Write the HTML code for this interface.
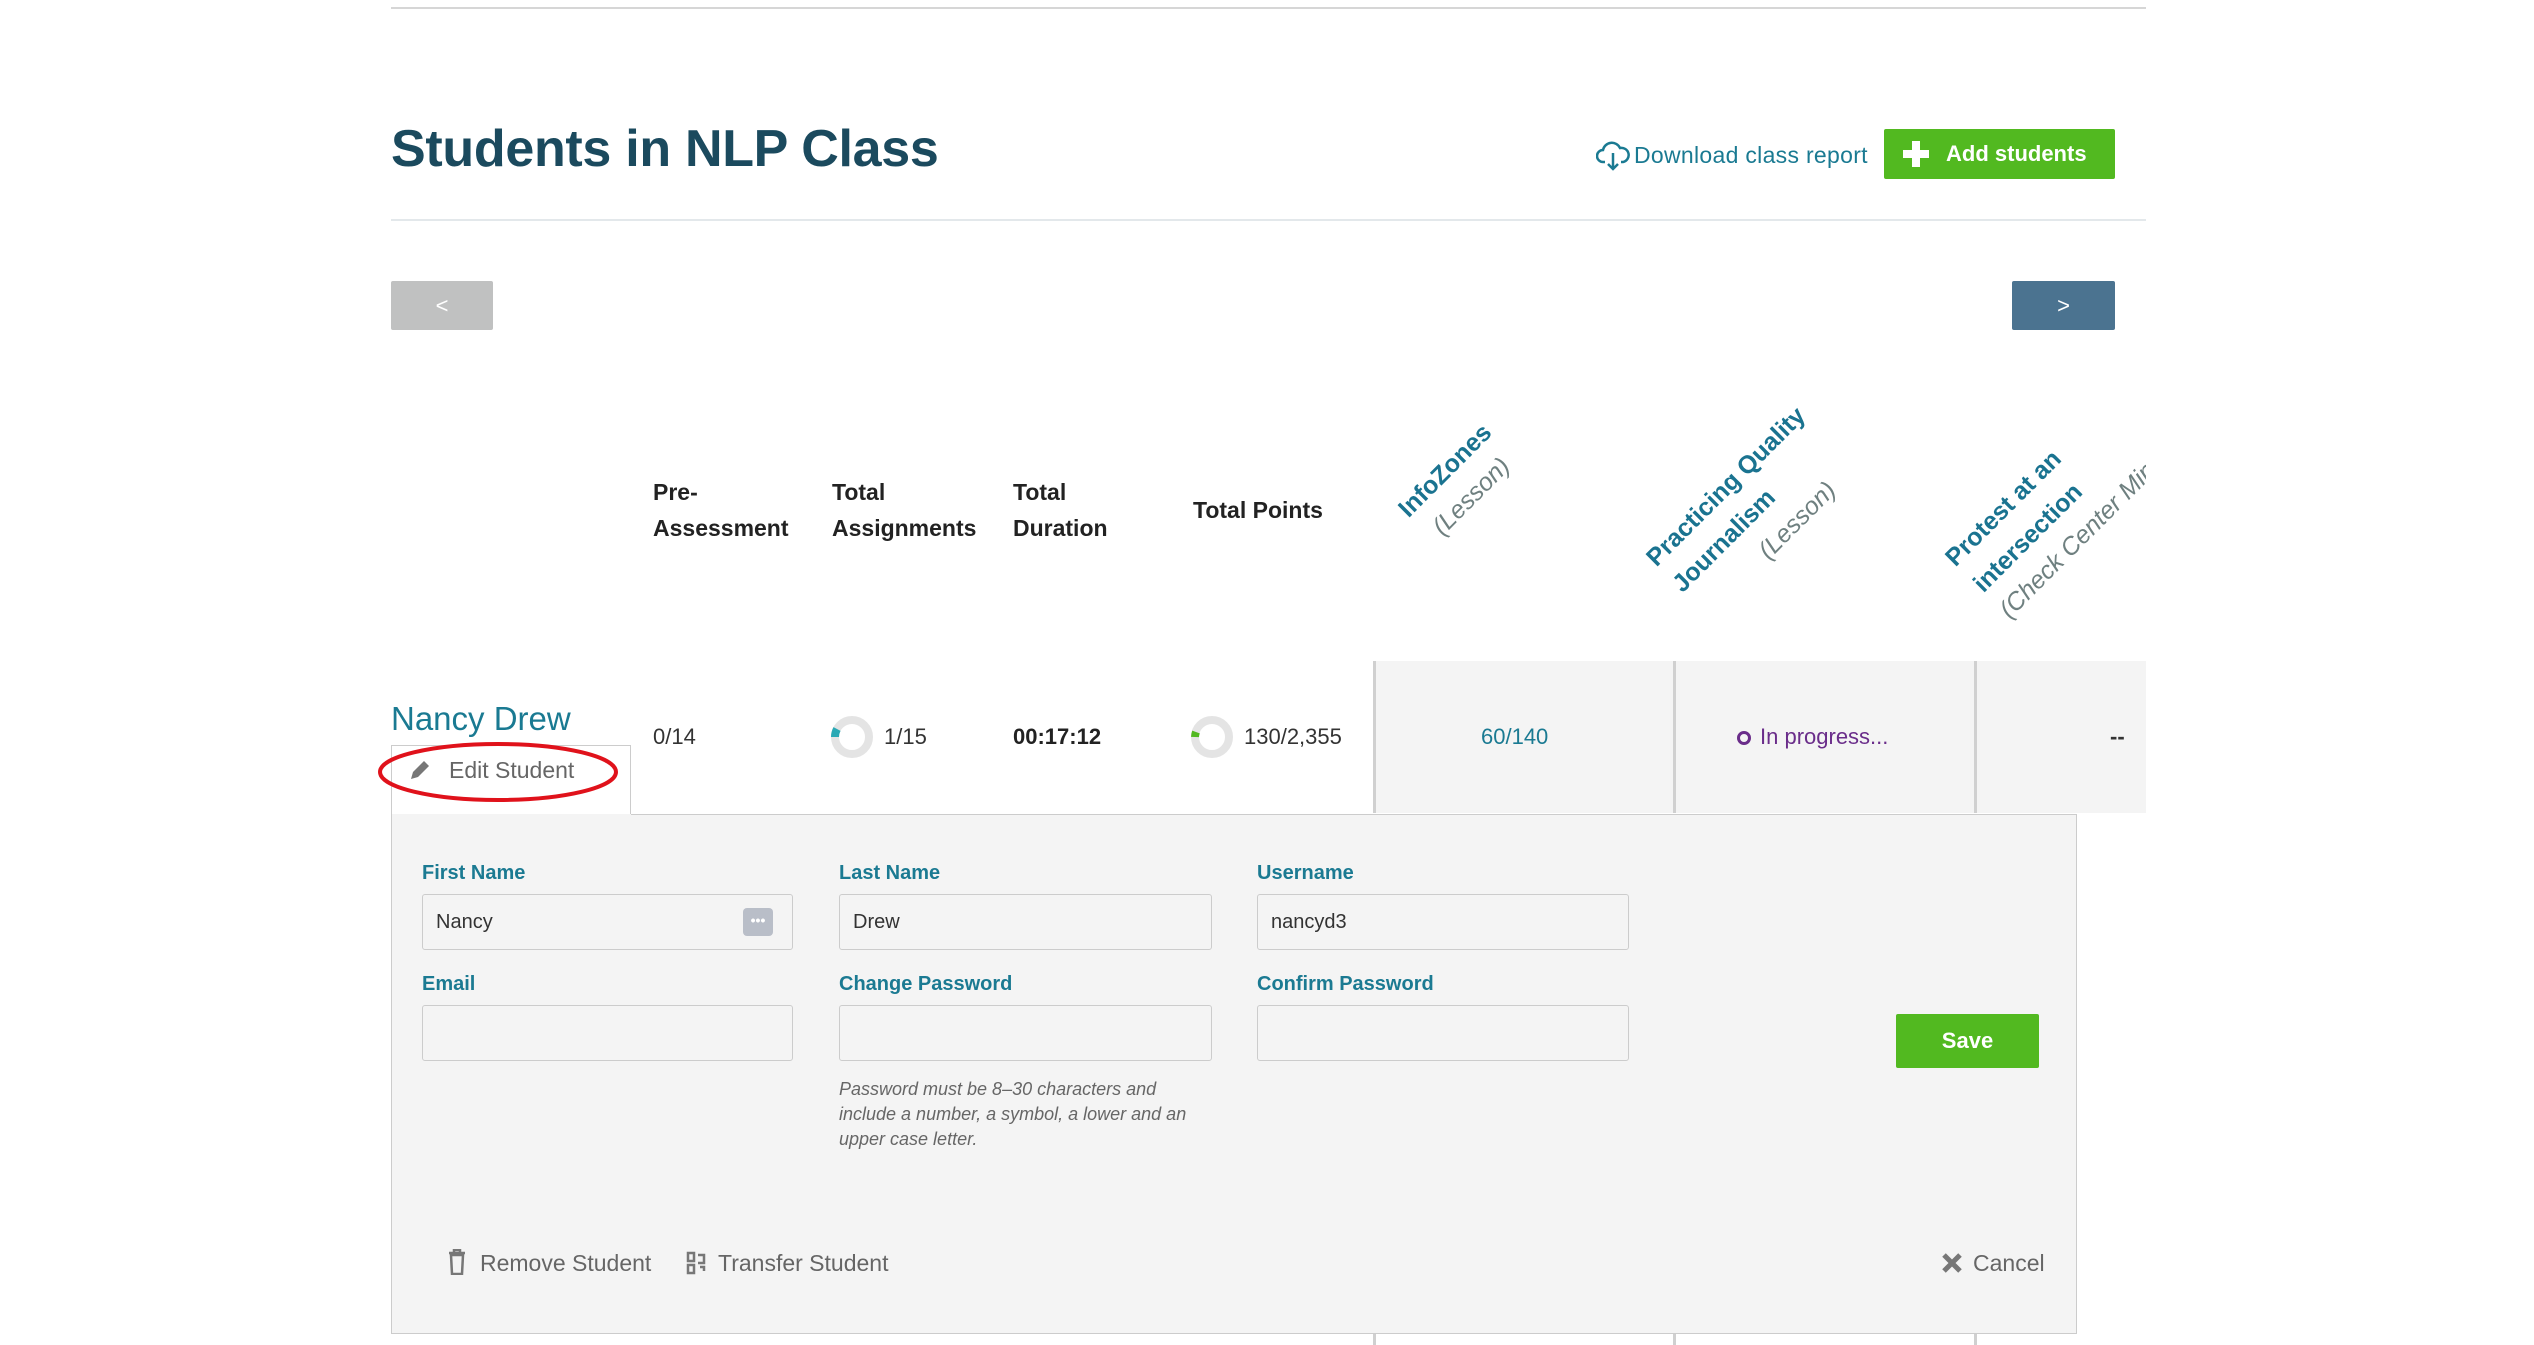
<!DOCTYPE html>
<html><head><meta charset="utf-8"><style>
*{margin:0;padding:0;box-sizing:border-box}
body{width:2534px;height:1345px;background:#fff;font-family:"Liberation Sans",sans-serif;position:relative;overflow:hidden;color:#333}
.a{position:absolute;white-space:nowrap}
.hd{font-weight:bold;font-size:23px;color:#222;line-height:36px}
.rot{position:absolute;white-space:nowrap;transform-origin:0 100%;transform:rotate(-45deg);font-size:25px;font-weight:bold;line-height:26px}
.t{color:#1a7390}.g{color:#6f8080;font-style:italic;font-weight:normal}
.lbl{font-size:20px;font-weight:bold;color:#1b7a92}
.inp{position:absolute;height:56px;background:#f4f4f4;border:1px solid #ccc;border-radius:3px;font-size:20px;color:#333;padding:0 13px;line-height:54px}
</style></head><body>
<div class="a" style="left:391px;top:7px;width:1755px;height:2px;background:#d6d6d6"></div>
<div class="a" style="left:391px;top:119px;font-size:52px;font-weight:bold;color:#1b4a5e;letter-spacing:-0.3px">Students in NLP Class</div>
<svg class="a" style="left:1596px;top:141px" width="34" height="30" viewBox="0 0 34 30"><path d="M9 21H7a6 6 0 0 1 0-12 9 9 0 0 1 17-2 7 7 0 0 1 3 14h-2" fill="none" stroke="#1a7a92" stroke-width="2.5"/><path d="M17 12v16M12 23l5 5 5-5" fill="none" stroke="#1a7a92" stroke-width="2.5"/></svg>
<div class="a" style="left:1634px;top:142px;font-size:23px;color:#1a7a92;letter-spacing:0.3px">Download class report</div>
<div class="a" style="left:1884px;top:129px;width:231px;height:50px;background:#52b920;border-radius:2px;color:#fff;font-weight:bold;font-size:22px;line-height:50px;padding-left:62px">Add students</div>
<div class="a" style="left:1912px;top:141px;width:8px;height:26px;background:#fff"></div>
<div class="a" style="left:1903px;top:150px;width:26px;height:8px;background:#fff"></div>
<div class="a" style="left:391px;top:219px;width:1755px;height:2px;background:#e3e8eb"></div>
<div class="a" style="left:391px;top:281px;width:102px;height:49px;background:#c0c1c1;border-radius:2px;color:#fff;font-size:22px;text-align:center;line-height:49px">&lt;</div>
<div class="a" style="left:2012px;top:281px;width:103px;height:49px;background:#4b7390;border-radius:2px;color:#fff;font-size:22px;text-align:center;line-height:49px">&gt;</div>
<div class="a hd" style="left:653px;top:474px">Pre-<br>Assessment</div>
<div class="a hd" style="left:832px;top:474px">Total<br>Assignments</div>
<div class="a hd" style="left:1013px;top:474px">Total<br>Duration</div>
<div class="a hd" style="left:1193px;top:492px">Total Points</div>
<div class="a" style="left:1374px;top:661px;width:772px;height:152px;background:#f4f4f4"></div>
<div class="a" style="left:1373px;top:661px;width:3px;height:152px;background:#d0d0d0"></div>
<div class="a" style="left:1673px;top:661px;width:3px;height:152px;background:#d0d0d0"></div>
<div class="a" style="left:1974px;top:661px;width:3px;height:152px;background:#d0d0d0"></div>
<div class="a" style="left:0;top:0;width:2146px;height:660px;overflow:hidden">
<span class="rot t" style="left:1412px;top:496px">InfoZones</span>
<span class="rot g" style="left:1446px;top:514px">(Lesson)</span>
<span class="rot t" style="left:1660px;top:545px">Practicing Quality</span>
<span class="rot t" style="left:1686px;top:571px">Journalism</span>
<span class="rot g" style="left:1772px;top:538px">(Lesson)</span>
<span class="rot t" style="left:1959px;top:545px">Protest at an</span>
<span class="rot t" style="left:1987px;top:571px">intersection</span>
<span class="rot g" style="left:2013px;top:597px">(Check Center Mini)</span>
</div>
<div class="a" style="left:1373px;top:1333px;width:3px;height:12px;background:#d0d0d0"></div>
<div class="a" style="left:1673px;top:1333px;width:3px;height:12px;background:#d0d0d0"></div>
<div class="a" style="left:1974px;top:1333px;width:3px;height:12px;background:#d0d0d0"></div>
<div class="a" style="left:391px;top:700px;font-size:33px;color:#1a7a92">Nancy Drew</div>
<div class="a" style="left:391px;top:745px;width:240px;height:70px;border:1px solid #ccc;border-bottom:none;background:#fff"></div>
<svg class="a" style="left:408px;top:758px" width="24" height="24" viewBox="0 0 24 24"><path d="M3 21l2-7L16 3l5 5-11 11z" fill="#777"/></svg>
<div class="a" style="left:449px;top:757px;font-size:23px;color:#666">Edit Student</div>
<svg class="a" style="left:376px;top:740px" width="246" height="66"><ellipse cx="122" cy="32" rx="118" ry="28" fill="none" stroke="#e0121b" stroke-width="4"/></svg>
<div class="a" style="left:653px;top:724px;font-size:22px;color:#333">0/14</div>
<svg class="a" style="left:831px;top:716px" width="42" height="42" viewBox="0 0 42 42"><circle cx="21" cy="21" r="17" fill="none" stroke="#e4e4e4" stroke-width="8"/><path d="M4 21A17 17 0 0 1 6 13" fill="none" stroke="#2aa9b5" stroke-width="8"/></svg>
<div class="a" style="left:884px;top:724px;font-size:22px">1/15</div>
<div class="a" style="left:1013px;top:724px;font-size:22px;font-weight:bold;color:#222">00:17:12</div>
<svg class="a" style="left:1191px;top:716px" width="42" height="42" viewBox="0 0 42 42"><circle cx="21" cy="21" r="17" fill="none" stroke="#e4e4e4" stroke-width="8"/><path d="M4 21A17 17 0 0 1 5 16" fill="none" stroke="#52b920" stroke-width="8"/></svg>
<div class="a" style="left:1244px;top:724px;font-size:22px">130/2,355</div>
<div class="a" style="left:1481px;top:724px;font-size:22px;color:#1a7a92">60/140</div>
<div class="a" style="left:1737px;top:731px;width:14px;height:14px;border:3px solid #6a2d8a;border-radius:50%"></div>
<div class="a" style="left:1760px;top:724px;font-size:22px;color:#6a2d8a">In progress...</div>
<div class="a" style="left:2110px;top:724px;font-size:22px;font-weight:bold">--</div>
<div class="a" style="left:391px;top:814px;width:1686px;height:520px;background:#f4f4f4;border:1px solid #ccc;border-top:none"></div>
<div class="a" style="left:631px;top:814px;width:1446px;height:1px;background:#ccc"></div>
<div class="a lbl" style="left:422px;top:862px">First Name</div>
<div class="a lbl" style="left:839px;top:862px">Last Name</div>
<div class="a lbl" style="left:1257px;top:862px">Username</div>
<div class="inp" style="left:422px;top:894px;width:371px">Nancy</div>
<div class="a" style="left:743px;top:908px;width:30px;height:28px;background:#b9bec8;border-radius:4px;color:#fff;font-size:14px;text-align:center;line-height:24px;font-weight:bold">•••</div>
<div class="inp" style="left:839px;top:894px;width:373px">Drew</div>
<div class="inp" style="left:1257px;top:894px;width:372px">nancyd3</div>
<div class="a lbl" style="left:422px;top:973px">Email</div>
<div class="a lbl" style="left:839px;top:973px">Change Password</div>
<div class="a lbl" style="left:1257px;top:973px">Confirm Password</div>
<div class="inp" style="left:422px;top:1005px;width:371px"></div>
<div class="inp" style="left:839px;top:1005px;width:373px"></div>
<div class="inp" style="left:1257px;top:1005px;width:372px"></div>
<div class="a" style="left:1896px;top:1014px;width:143px;height:54px;background:#52b920;border-radius:2px;color:#fff;font-weight:bold;font-size:22px;text-align:center;line-height:54px">Save</div>
<div class="a" style="left:839px;top:1077px;font-size:18px;font-style:italic;color:#666;line-height:25px">Password must be 8–30 characters and<br>include a number, a symbol, a lower and an<br>upper case letter.</div>
<svg class="a" style="left:447px;top:1249px" width="20" height="26" viewBox="0 0 20 26"><path d="M2 4h16M7 4V1h6v3M4 6l1 19h10l1-19z" fill="none" stroke="#777" stroke-width="2.5"/></svg>
<div class="a" style="left:480px;top:1250px;font-size:23px;color:#666">Remove Student</div>
<svg class="a" style="left:686px;top:1251px" width="22" height="24" viewBox="0 0 22 24"><path d="M2 2h6v8H2zM2 14h6v8H2zM12 4h6v8h-6M14 16h4v4" fill="none" stroke="#777" stroke-width="2.5"/></svg>
<div class="a" style="left:718px;top:1250px;font-size:23px;color:#666">Transfer Student</div>
<svg class="a" style="left:1940px;top:1251px" width="24" height="24" viewBox="0 0 24 24"><path d="M4 4l16 16M20 4L4 20" stroke="#777" stroke-width="5"/></svg>
<div class="a" style="left:1973px;top:1250px;font-size:23px;color:#666">Cancel</div>
</body></html>
